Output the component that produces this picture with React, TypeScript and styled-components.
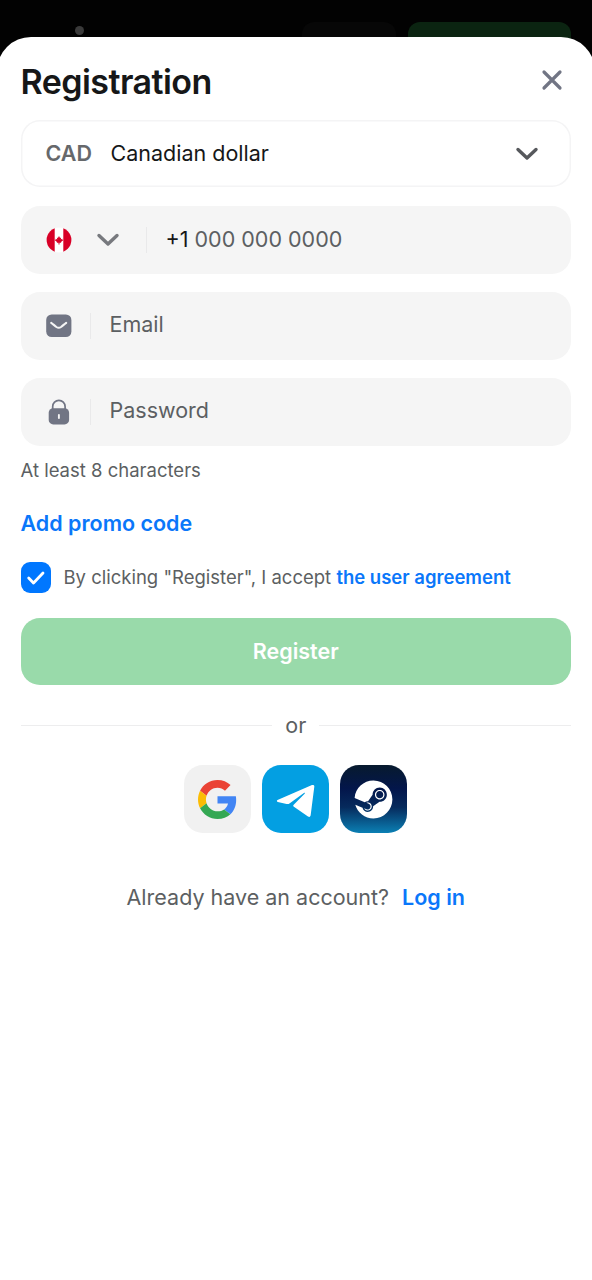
import React from 'react';
import styled, { createGlobalStyle } from 'styled-components';
import { FaSteam } from 'react-icons/fa';

const GlobalStyle = createGlobalStyle`
  * { box-sizing: border-box; }
  body { margin: 0; background: #020202; font-family: Inter, sans-serif; color: #161718; }
  button, a { font: inherit; color: inherit; text-decoration: none; }
  button { border: 0; padding: 0; background: none; cursor: pointer; }
`;

const Page = styled.div`
  height: 1280px;
  overflow: hidden;
  display: flex;
  flex-direction: column;
`;

const Backdrop = styled.header`
  height: 37px;
  flex: none;
  display: flex;
  align-items: flex-start;
  padding: 22px 0 0 75px;
`;

const Dot = styled.span`
  width: 9px;
  height: 9px;
  margin-top: 4px;
  border-radius: 50%;
  background: #3a3a3a;
`;

const Ghost = styled.span<{ $width: number; $left: number; $color: string }>`
  width: ${(p) => p.$width}px;
  height: 36px;
  margin: 0 0 -21px ${(p) => p.$left}px;
  border-radius: 12px;
  background: ${(p) => p.$color};
`;

const Sheet = styled.main`
  position: relative;
  flex: 1;
  margin: 0 -3px;
  padding: 26px 24px 0 23.5px;
  border-radius: 34px 34px 0 0;
  background: #fff;
`;

const Head = styled.div`
  display: flex;
  align-items: center;
  justify-content: space-between;
  height: 38px;
  padding-right: 8px;
  margin-bottom: 19px;
`;

const Title = styled.h1`
  margin: 0;
  font-size: 34px;
  font-weight: 600;
  line-height: 38px;
  letter-spacing: -0.55px;
`;

const Close = styled.button`
  display: flex;
  margin-top: -4px;
`;

const Field = styled.div<{ $outlined?: boolean }>`
  display: flex;
  align-items: center;
  height: ${(p) => (p.$outlined ? 67 : 68)}px;
  margin-bottom: ${(p) => (p.$outlined ? 19 : 18)}px;
  padding: 0 25px;
  border-radius: 19px;
  font-size: 21.5px;
  line-height: 26px;
  color: #5c5f62;
  background: ${(p) => (p.$outlined ? '#fff' : '#f5f5f5')};
  box-shadow: ${(p) => (p.$outlined ? 'inset 0 0 0 1.5px #f4f4f5' : 'none')};
`;

const Code = styled.span`
  font-weight: 600;
  width: 65px;
  padding-bottom: 2px;
  color: #66686b;
`;

const Value = styled.span`
  color: #161718;
`;

const Currency = styled(Value)`
  flex: 1;
  padding-bottom: 2px;
`;

const Slot = styled.span<{ $width: number }>`
  display: flex;
  width: ${(p) => p.$width}px;
`;

const Separator = styled.span`
  width: 1px;
  height: 26px;
  margin-right: 19px;
  background: #e9e9ea;
`;

const Placeholder = styled.span`
  padding-bottom: 5px;
`;

const PhoneNumber = styled.span`
  padding-bottom: 3px;
`;

const Hint = styled.p`
  margin: -6px 0 0;
  font-size: 18.5px;
  line-height: 24px;
  color: #5c5f62;
`;

const Promo = styled.a`
  display: block;
  margin-top: 27px;
  font-size: 21.5px;
  line-height: 28px;
  font-weight: 600;
  color: #0a77fa;
`;

const Agreement = styled.label`
  display: flex;
  align-items: center;
  gap: 12.5px;
  height: 31px;
  margin-top: 25px;
  font-size: 18.5px;
  line-height: 23px;
  color: #5c5f62;
`;

const AgreementText = styled.span`
  padding-bottom: 1px;
`;

const Checkbox = styled.span`
  display: grid;
  place-items: center;
  width: 30.5px;
  height: 31px;
  border-radius: 9px;
  background: #0077ff;
`;

const Link = styled.a`
  font-weight: 600;
  color: #0a77fa;
`;

const Submit = styled.button`
  display: block;
  width: 100%;
  height: 67px;
  margin-top: 25px;
  padding-bottom: 1px;
  border-radius: 19px;
  font-size: 21.5px;
  font-weight: 600;
  color: #fff;
  background: #99daaa;
`;

const Divider = styled.div`
  display: flex;
  align-items: center;
  gap: 13px;
  margin-top: 26px;
  height: 28px;
  font-size: 21.5px;
  color: #5c5f62;
  &::before, &::after {
    content: '';
    flex: 1;
    height: 1px;
    background: #ededee;
  }
`;

const Socials = styled.div`
  display: flex;
  justify-content: center;
  gap: 11px;
  margin-top: 26px;
  padding-right: 0.5px;
`;

const Social = styled.button<{ $bg: string }>`
  display: grid;
  place-items: center;
  width: 67px;
  height: 68px;
  border-radius: 19px;
  background: ${(p) => p.$bg};
`;

const Footer = styled.p`
  display: flex;
  justify-content: center;
  gap: 13px;
  margin: 50px 0 0;
  font-size: 21.5px;
  line-height: 28px;
  color: #5c5f62;
`;

const Chevron = ({ color }: { color: string }) => (
  <svg width="24" height="16" viewBox="0 0 24 16" fill="none" stroke={color} strokeWidth="3.4" strokeLinecap="round" strokeLinejoin="round">
    <path d="M3 3.5 12 12l9-8.5" />
  </svg>
);

const CanadaFlag = () => (
  <svg width="26" height="26" viewBox="0 0 26 26">
    <clipPath id="round"><circle cx="13" cy="13" r="12.4" /></clipPath>
    <g clipPath="url(#round)">
      <path fill="#fff" d="M0 0h26v26H0z" />
      <path fill="#d80027" d="M0 0h8.7v26H0zM17.3 0H26v26h-8.7z" />
      <path fill="#d80027" d="M13 9 14.1 11l1-.4-.3 1.900 1.600-.7 0 1 .8.400-2.200 1.900.2.700h-1.700V17.500h-1v-1.700h-1.700l.2-.7-2.200-1.900.8-.4v-1l1.600.7-.3-1.900 1 .4z" />
    </g>
  </svg>
);

const MailIcon = () => (
  <svg width="26" height="24" viewBox="0 0 26 24">
    <rect x=".2" y=".4" width="25.2" height="22.6" rx="5.5" fill="#717584" />
    <path d="M5.2 8.8c2 1.5 3.5 3 5.2 4.2 1.5 1 3.1 1 4.6 0 1.7-1.2 3.2-2.700 5.200-4.200" fill="none" stroke="#f5f5f5" strokeWidth="2.1" strokeLinecap="round" />
  </svg>
);

const LockIcon = () => (
  <svg width="26" height="26" viewBox="0 0 26 26">
    <path d="M6.7 11V7.6a6.200 6.200 0 0 1 12.400 0V11" fill="none" stroke="#717584" strokeWidth="1.7" />
    <rect x="2.7" y="9.2" width="20.4" height="16.2" rx="4.5" fill="#717584" />
    <path d="M12.9 16v3" stroke="#f5f5f5" strokeWidth="1.9" strokeLinecap="round" />
  </svg>
);

const GoogleIcon = () => (
  <svg width="39" height="39" viewBox="0 0 48 48">
    <path fill="#EA4335" d="M24 9.500c3.540 0 6.710 1.220 9.210 3.600l6.850-6.850C35.900 2.380 30.470 0 24 0 14.620 0 6.510 5.380 2.560 13.220l7.980 6.190C12.430 13.720 17.740 9.500 24 9.500z" />
    <path fill="#4285F4" d="M46.980 24.550c0-1.570-.15-3.090-.38-4.550H24v9.020h12.940c-.58 2.960-2.260 5.480-4.780 7.180l7.730 6c4.510-4.180 7.090-10.360 7.090-17.650z" />
    <path fill="#FBBC05" d="M10.530 28.590c-.48-1.450-.76-2.990-.76-4.590s.27-3.140.76-4.590l-7.980-6.190C.92 16.460 0 20.120 0 24c0 3.880.92 7.540 2.560 10.780l7.970-6.190z" />
    <path fill="#34A853" d="M24 48c6.480 0 11.930-2.130 15.890-5.810l-7.730-6c-2.150 1.450-4.920 2.300-8.160 2.300-6.260 0-11.570-4.220-13.470-9.910l-7.980 6.190C6.510 42.620 14.620 48 24 48z" />
  </svg>
);

const TelegramIcon = () => (
  <svg width="39" height="35" viewBox="0 -1 39 35" fill="#fff">
    <path d="M1.500 17 36 2.100c1.500-.6 2.500.1 2.300 1.700l-3.600 28.300c-.2 1.800-1.300 2.300-2.700 1.400L17.900 23.800c-.9-.6-.9-1.300-.2-2L28.600 10.700c.6-.7.1-1.200-.7-.7L13.800 20.200c-1 .8-2 1-3.200.8l-8.800-2c-1.200-.3-1.300-1.400-.3-2z" />
  </svg>
);

export default function App() {
  return (
    <Page>
      <GlobalStyle />
      <Backdrop>
        <Dot />
        <Ghost $width={94} $left={218} $color="#070707" />
        <Ghost $width={163} $left={12} $color="#0b2411" />
      </Backdrop>
      <Sheet>
        <Head>
          <Title>Registration</Title>
          <Close aria-label="Close">
            <svg width="22" height="22" viewBox="0 0 22 22" stroke="#717584" strokeWidth="3.2" strokeLinecap="round">
              <path d="m3 3 16 16M19 3 3 19" />
            </svg>
          </Close>
        </Head>
        <Field $outlined>
          <Code>CAD</Code>
          <Currency>Canadian dollar</Currency>
          <Slot $width={31}><Chevron color="#56585c" /></Slot>
        </Field>
        <Field>
          <Slot $width={50}><CanadaFlag /></Slot>
          <Slot $width={50}><Chevron color="#77797e" /></Slot>
          <Separator />
          <PhoneNumber><Value>+1</Value> 000 000 0000</PhoneNumber>
        </Field>
        <Field>
          <Slot $width={44}><MailIcon /></Slot>
          <Separator />
          <Placeholder>Email</Placeholder>
        </Field>
        <Field>
          <Slot $width={44}><LockIcon /></Slot>
          <Separator />
          <Placeholder>Password</Placeholder>
        </Field>
        <Hint>At least 8 characters</Hint>
        <Promo>Add promo code</Promo>
        <Agreement>
          <Checkbox>
            <svg width="20" height="16" viewBox="0 0 20 16" fill="none" stroke="#fff" strokeWidth="2.8" strokeLinecap="round" strokeLinejoin="round">
              <path d="m2.7 8 4.8 5L17 3" />
            </svg>
          </Checkbox>
          <AgreementText>By clicking "Register", I accept <Link>the user agreement</Link></AgreementText>
        </Agreement>
        <Submit>Register</Submit>
        <Divider>or</Divider>
        <Socials>
          <Social $bg="#f1f1f1" aria-label="Google"><GoogleIcon /></Social>
          <Social $bg="#039fe2" aria-label="Telegram"><TelegramIcon /></Social>
          <Social $bg="linear-gradient(180deg, #071a2e 0%, #03164b 35%, #062a5c 62%, #0b80b4 100%)" aria-label="Steam">
            <FaSteam size={39} color="#fff" />
          </Social>
        </Socials>
        <Footer>
          Already have an account?
          <Link>Log in</Link>
        </Footer>
      </Sheet>
    </Page>
  );
}
